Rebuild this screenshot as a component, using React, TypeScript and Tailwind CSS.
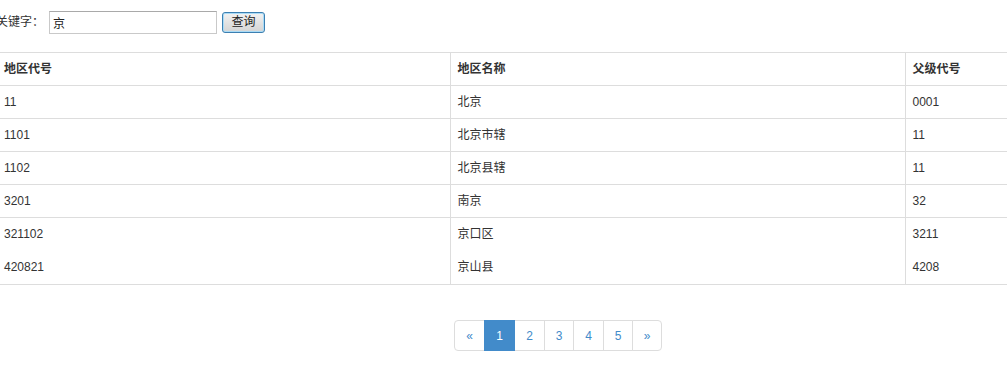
import React from "react";

const rows: { code: string; name: string; parent: string; noTop?: boolean }[] = [
  { code: "11", name: "北京", parent: "0001" },
  { code: "1101", name: "北京市辖", parent: "11" },
  { code: "1102", name: "北京县辖", parent: "11" },
  { code: "3201", name: "南京", parent: "32" },
  { code: "321102", name: "京口区", parent: "3211" },
  { code: "420821", name: "京山县", parent: "4208", noTop: true },
];

const pages: { p: string; w: string }[] = [
  { p: "«", w: "w-[31px]" },
  { p: "1", w: "w-[31px]" },
  { p: "2", w: "w-[31px]" },
  { p: "3", w: "w-[30px]" },
  { p: "4", w: "w-[31px]" },
  { p: "5", w: "w-[30px]" },
  { p: "»", w: "w-[30px]" },
];

export default function App() {
  const font = { fontFamily: '"Liberation Sans", "Noto Sans CJK SC", sans-serif' };
  return (
    <div className="w-[1007px] h-[371px] overflow-hidden bg-white text-[12px] text-[#333]" style={font}>
      <div className="flex items-center ml-[-4px] pt-[10px] h-[34px]">
        <span className="w-[53px] shrink-0">关键字：</span>
        <input
          defaultValue="京"
          className="w-[168px] h-[23px] border border-[#c9c9c9] border-t-[#a9a9a9] px-[3px] text-[12px] text-[#222] outline-none"
          style={font}
        />
        <button
          className="ml-[5px] w-[43px] h-[21px] rounded-[3px] border border-[#3c7fb1] bg-gradient-to-b from-[#f2f2f2] to-[#d4d4d4] text-[12px] text-[#222] leading-none shadow-[inset_0_0_0_1px_#a9dbf6]"
          style={font}
        >
          查询
        </button>
      </div>
      <table className="ml-[-4px] mt-[18px] w-[1130px] border-collapse table-fixed">
        <colgroup>
          <col className="w-[454px]" />
          <col className="w-[455px]" />
          <col />
        </colgroup>
        <thead>
          <tr className="h-[33px] border-t border-[#ddd]">
            <th className="text-left font-bold px-[8px] align-middle">地区代号</th>
            <th className="text-left font-bold px-[7px] align-middle border-l border-[#ddd]">地区名称</th>
            <th className="text-left font-bold px-[7px] align-middle border-l border-[#ddd]">父级代号</th>
          </tr>
        </thead>
        <tbody>
          {rows.map((r) => (
            <tr key={r.code} className={r.noTop ? "h-[34px]" : "h-[33px] border-t border-[#ddd]"}>
              <td className="px-[8px] align-middle">{r.code}</td>
              <td className="px-[7px] align-middle border-l border-[#ddd]">{r.name}</td>
              <td className="px-[7px] align-middle border-l border-[#ddd]">{r.parent}</td>
            </tr>
          ))}
          <tr className="h-0 border-t border-[#ddd]">
            <td></td>
            <td></td>
            <td></td>
          </tr>
        </tbody>
      </table>
      <div className="pl-[454px] mt-[35px]">
        <ul className="inline-flex text-[#428bca] text-[12px]">
          {pages.map(({ p, w }, i) => {
            const active = p === "1";
            const first = i === 0;
            const last = i === pages.length - 1;
            return (
              <li
                key={p}
                className={`h-[31px] ${w} flex items-center justify-center border ${
                  first ? "rounded-l-[4px]" : "-ml-px"
                } ${last ? "rounded-r-[4px]" : ""} ${
                  active ? "bg-[#428bca] border-[#428bca] text-white relative" : "bg-white border-[#ddd]"
                }`}
              >
                {p}
              </li>
            );
          })}
        </ul>
      </div>
    </div>
  );
}
